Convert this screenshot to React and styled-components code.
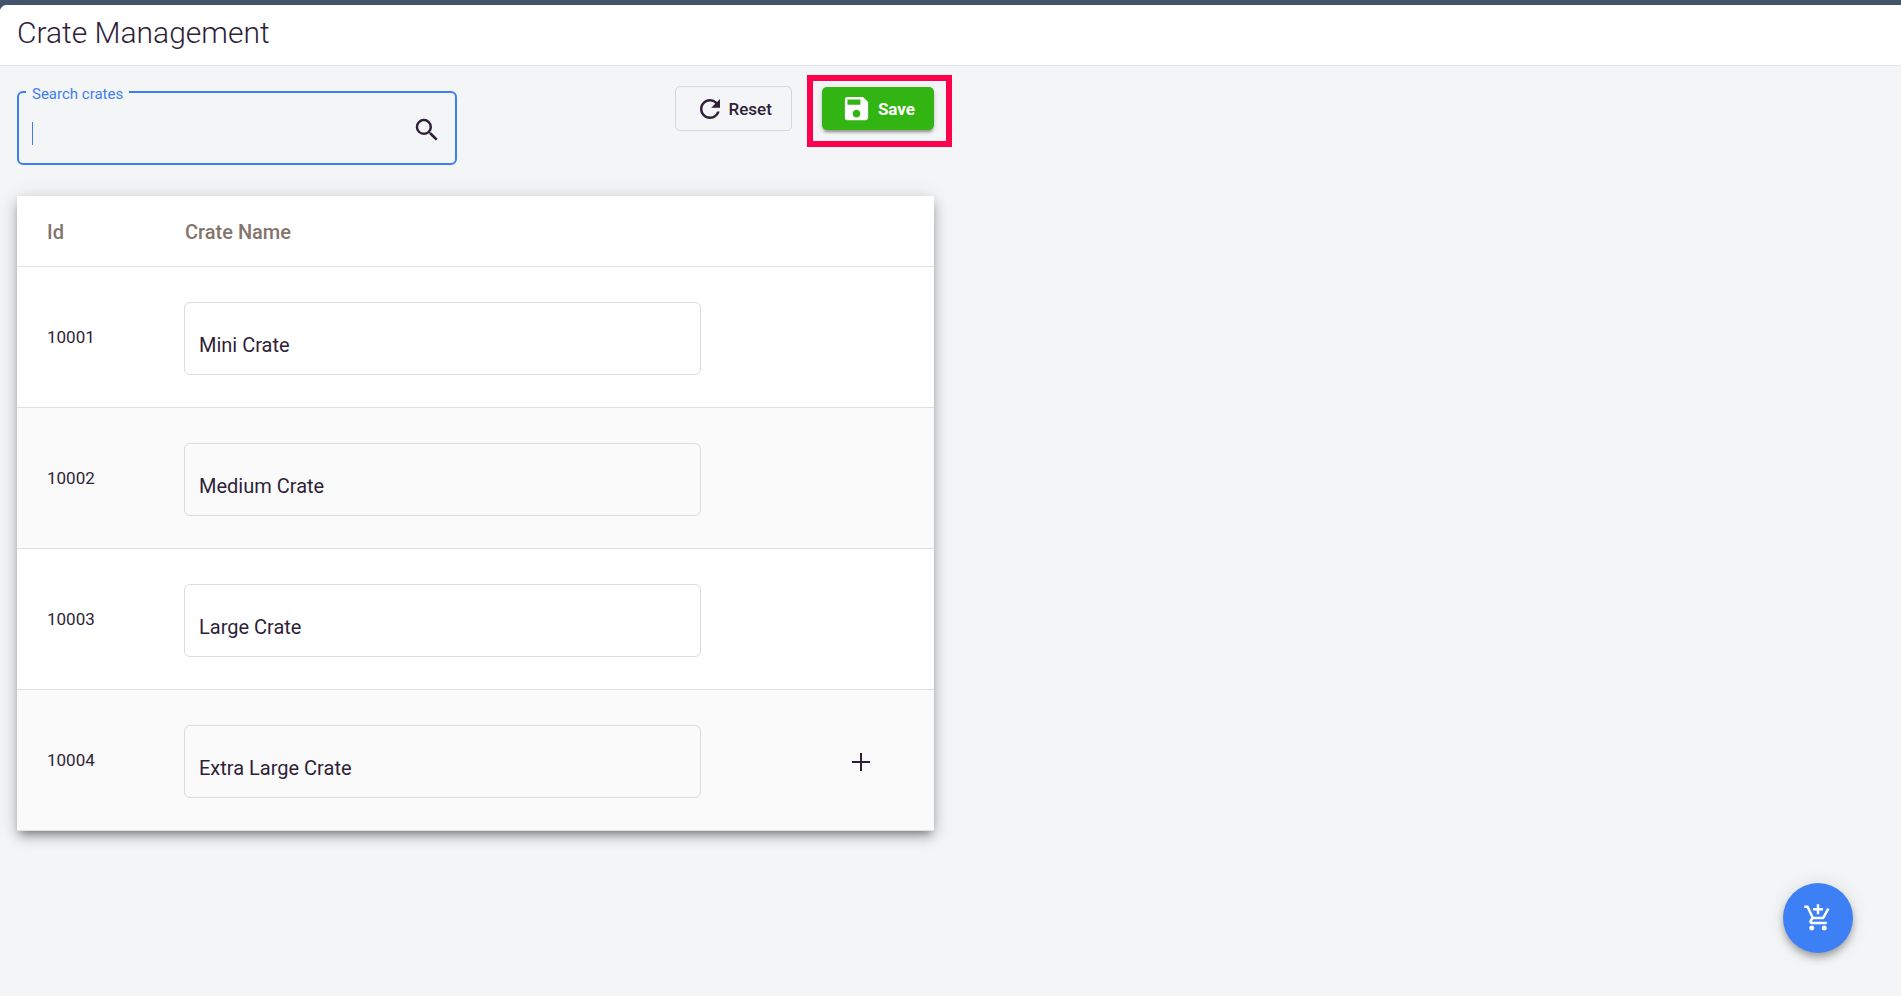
import React, { useState } from "react";
import styled, { createGlobalStyle } from "styled-components";
import {
  MdAddShoppingCart,
  MdRefresh,
  MdSave,
  MdSearch,
} from "react-icons/md";

const initialCrates = [
  { id: 10001, name: "Mini Crate" },
  { id: 10002, name: "Medium Crate" },
  { id: 10003, name: "Large Crate" },
  { id: 10004, name: "Extra Large Crate" },
];

function App() {
  const [crates, setCrates] = useState(initialCrates);
  const [search, setSearch] = useState("");

  const rename = (id, name) => {
    setCrates(crates.map((c) => (c.id === id ? { ...c, name } : c)));
  };

  const addCrate = () => {
    setCrates([...crates, { id: crates[crates.length - 1].id + 1, name: "" }]);
  };

  const visible = crates.filter((c) =>
    c.name.toLowerCase().includes(search.toLowerCase())
  );

  return (
    <>
      <GlobalStyle />
      <Page>
        <Header>
          <Title>Crate Management</Title>
        </Header>
        <Content>
          <Panel>
            <Toolbar>
              <SearchField>
                <SearchLegend>
                  <label htmlFor="search">Search crates</label>
                </SearchLegend>
                <SearchRow>
                  <SearchInput
                    id="search"
                    type="text"
                    autoFocus
                    autoComplete="off"
                    $empty={search === ""}
                    value={search}
                    onChange={(e) => setSearch(e.target.value)}
                  />
                  <MdSearch size={30} />
                </SearchRow>
              </SearchField>
              <Actions>
                <ResetButton
                  type="button"
                  onClick={() => setCrates(initialCrates)}
                >
                  <MdRefresh size={30} />
                  <span>Reset</span>
                </ResetButton>
                <Highlight>
                  <SaveButton type="button">
                    <MdSave size={31} />
                    <span>Save</span>
                  </SaveButton>
                </Highlight>
              </Actions>
            </Toolbar>
            <Table>
              <colgroup>
                <IdCol />
                <col />
                <ActionCol />
              </colgroup>
              <thead>
                <tr>
                  <Th $first>Id</Th>
                  <Th>Crate Name</Th>
                  <Th as="td" />
                </tr>
              </thead>
              <tbody>
                {visible.map((crate, i) => (
                  <Row key={crate.id}>
                    <IdCell>{crate.id}</IdCell>
                    <NameCell>
                      <NameInput
                        type="text"
                        aria-label={`Name of crate ${crate.id}`}
                        value={crate.name}
                        onChange={(e) => rename(crate.id, e.target.value)}
                      />
                    </NameCell>
                    <ActionCell>
                      {i === visible.length - 1 && (
                        <AddButton
                          type="button"
                          aria-label="Add crate"
                          onClick={addCrate}
                        >
                          <PlusIcon />
                        </AddButton>
                      )}
                    </ActionCell>
                  </Row>
                ))}
              </tbody>
            </Table>
          </Panel>
        </Content>
        <CartButton type="button" aria-label="Add to cart">
          <MdAddShoppingCart size={30} />
        </CartButton>
      </Page>
    </>
  );
}

export default App;

function PlusIcon() {
  return (
    <svg width="30" height="30" viewBox="0 0 30 30" aria-hidden="true">
      <path d="M6 15h18M15 6v18" stroke="currentColor" strokeWidth="2" />
    </svg>
  );
}

const GlobalStyle = createGlobalStyle`
  * {
    box-sizing: border-box;
  }

  body {
    margin: 0;
    background: #f4f5f7;
    color: #2f1f38;
    font-family: Roboto, "Liberation Sans", sans-serif;
  }

  button, input {
    font-family: inherit;
    color: inherit;
  }

  svg {
    display: block;
    flex: none;
  }
`;

const Page = styled.div`
  min-height: 100vh;
`;
const Header = styled.header`
  border-top: 5px solid #43536b;
  border-bottom: 1px solid #e4e7ea;
  background: radial-gradient(circle at 100% 100%, #fff 8px, #43536b 9px) 0 0 / 8px 8px no-repeat #fff;
`;
const Title = styled.h1`
  margin: 0;
  padding: 8px 17px 12px;
  font-size: 30px;
  font-weight: 300;
  line-height: 40px;
`;
const Content = styled.main`
  display: grid;
  grid-template-columns: 1fr 1fr;
  gap: 33px;
  padding: 16px 17px 32px;
`;
const Panel = styled.section`
  min-width: 0;
`;
const Toolbar = styled.div`
  display: flex;
  align-items: flex-start;
  justify-content: space-between;
  margin-bottom: 31px;
`;

const SearchField = styled.fieldset`
  width: 48%;
  min-width: 0;
  margin: 0;
  padding: 0 13px 5px 7px;
  border: 2px solid #3d7ff0;
  border-radius: 6px;
`;
const SearchLegend = styled.legend`
  padding: 4px 6px 0;
  color: #3d7ff0;
  font-size: 15px;
  line-height: 16px;
`;
const SearchRow = styled.div`
  display: flex;
  align-items: center;
  height: 56px;
`;
// the empty field shows a steady caret bar instead of the blinking one
const SearchInput = styled.input`
  flex: 1;
  min-width: 0;
  height: 50px;
  padding: 6px 6px 0;
  border: none;
  outline: none;
  background: transparent;
  caret-color: ${(props) => (props.$empty ? "transparent" : "#3d7ff0")};
  font-size: 20px;

  &:focus {
    background: linear-gradient(#3d7ff0, #3d7ff0) 6px 17px no-repeat;
    background-size: ${(props) => (props.$empty ? "1px 23px" : "0 0")};
  }
`;

const Actions = styled.div`
  display: flex;
  align-items: center;
  gap: 30px;
  padding-top: 4px;
`;
const Button = styled.button`
  display: flex;
  align-items: center;
  padding: 0 19px;
  border-radius: 5px;
  font-size: 17px;
  font-weight: 500;
  cursor: pointer;
`;
const ResetButton = styled(Button)`
  gap: 4px;
  height: 45px;
  border: 1px solid #d5d9dc;
  background: transparent;
`;
const SaveButton = styled(Button)`
  gap: 6px;
  height: 43px;
  border: none;
  background: #32b512;
  color: #fff;
  font-weight: 700;
  box-shadow: 0 4px 2px -2px rgba(0, 0, 0, 0.2), 0 3px 3px rgba(0, 0, 0, 0.14),
    0 1px 6px rgba(0, 0, 0, 0.12);
`;
const Highlight = styled.div`
  position: relative;

  &::after {
    content: "";
    position: absolute;
    inset: -12px -18px -17px -15px;
    border: 6px solid #ff004f;
    pointer-events: none;
  }
`;

const Table = styled.table`
  width: 100%;
  table-layout: fixed;
  border-collapse: separate;
  border-spacing: 0;
  background: #fff;
  box-shadow: 0 6px 8px -4px rgba(0, 0, 0, 0.32),
    0 6px 12px rgba(0, 0, 0, 0.2), 0 2px 20px rgba(0, 0, 0, 0.12);
`;
const IdCol = styled.col`
  width: 167px;
`;
const ActionCol = styled.col`
  width: 233px;
`;
const Th = styled.th`
  height: 71px;
  padding: 2px 0 0 ${(props) => (props.$first ? "30px" : "1px")};
  border-bottom: 1px solid #dfe0e1;
  color: #84746d;
  font-size: 20px;
  font-weight: 500;
  text-align: left;
`;
const Row = styled.tr`
  &:nth-child(even) {
    background: #fafafa;
  }
`;
const Cell = styled.td`
  padding: 0;
  border-bottom: 1px solid #dfe0e1;
`;
const IdCell = styled(Cell)`
  padding-left: 30px;
  font-size: 17px;
`;
const NameCell = styled(Cell)`
  padding: 35px 0 32px;
`;
const ActionCell = styled(Cell)`
  padding: 4px 58px 0 0;
`;
const NameInput = styled.input`
  display: block;
  width: 100%;
  height: 73px;
  padding: 13px 14px 0;
  border: 1px solid #dcdcdd;
  border-radius: 6px;
  background: transparent;
  font-size: 20px;
`;
const AddButton = styled.button`
  display: block;
  margin-left: auto;
  padding: 0;
  border: none;
  background: transparent;
  cursor: pointer;
`;

const CartButton = styled.button`
  position: fixed;
  right: 48px;
  bottom: 43px;
  display: flex;
  align-items: center;
  justify-content: center;
  width: 70px;
  height: 70px;
  padding: 0;
  border: none;
  border-radius: 50%;
  background: #3d7ff4;
  color: #fff;
  cursor: pointer;
  box-shadow: 0 4px 6px -1px rgba(0, 0, 0, 0.2),
    0 6px 10px rgba(0, 0, 0, 0.14), 0 1px 18px rgba(0, 0, 0, 0.12);
`;
